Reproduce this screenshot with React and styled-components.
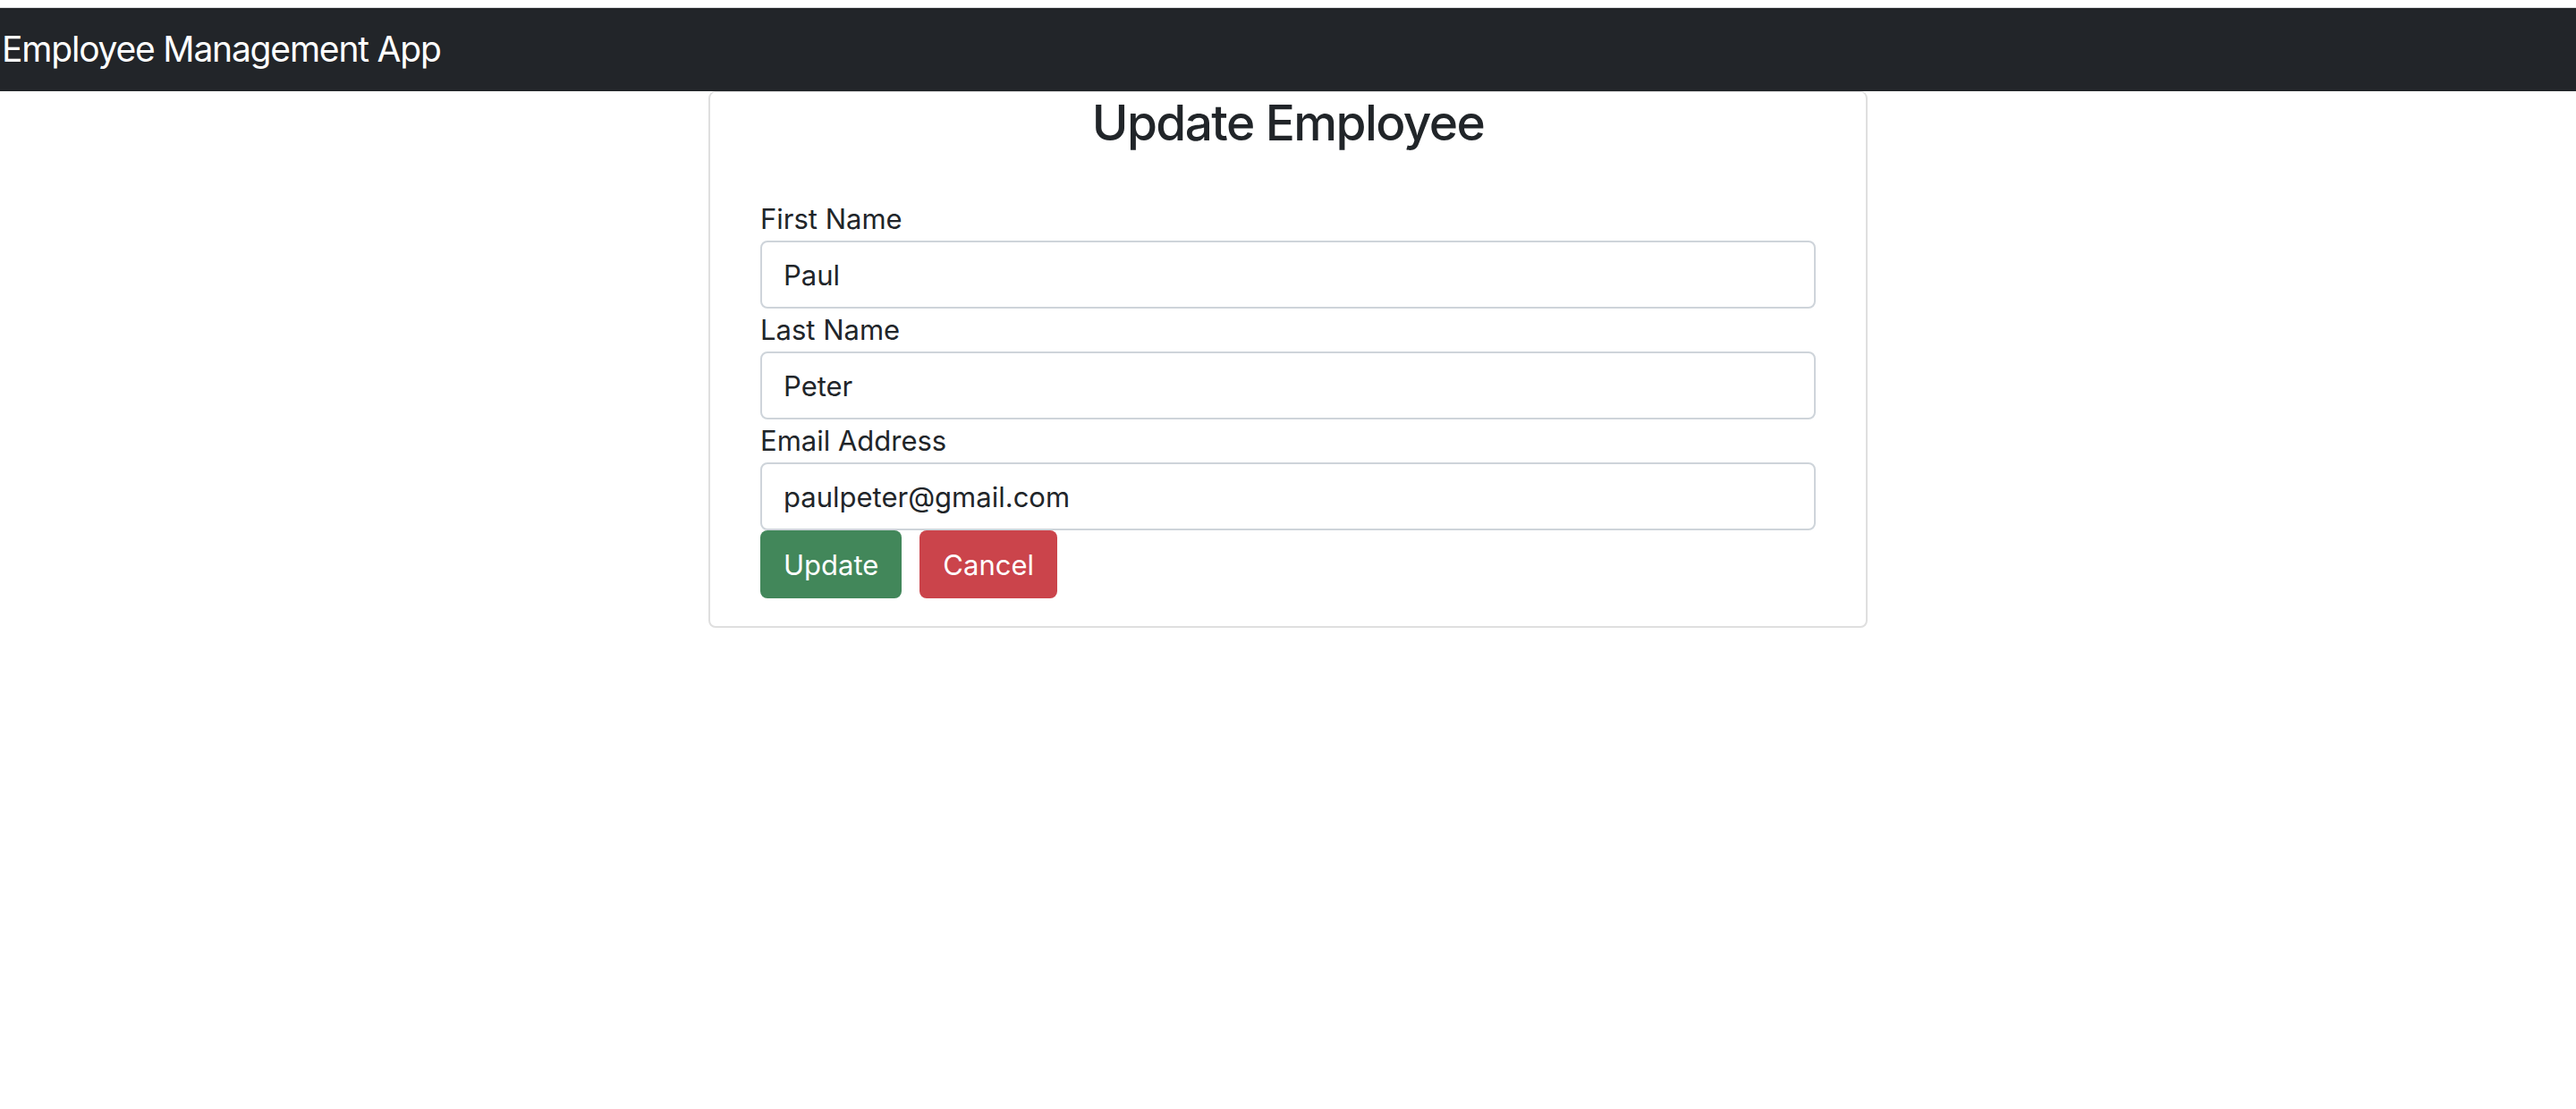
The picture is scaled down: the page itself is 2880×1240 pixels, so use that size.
import React from "react";
import styled, { createGlobalStyle } from "styled-components";

const Strings = {
  brand: "Employee Management App",
  title: "Update Employee",
  update: "Update",
  cancel: "Cancel"
};

const Fields = [
  { id: "firstName", label: "First Name", value: "Paul" },
  { id: "lastName", label: "Last Name", value: "Peter" },
  { id: "emailId", label: "Email Address", value: "paulpeter@gmail.com" }
];

const GlobalStyle = createGlobalStyle`
  body {
    margin: 0;
    background: #fff;
    color: #212529;
    font-family: Inter, "Liberation Sans", Arial, sans-serif;
  }
`;

const App = () => (
  <Page>
    <GlobalStyle />
    <Navbar>
      <Brand>{Strings.brand}</Brand>
    </Navbar>
    <Card>
      <Title>{Strings.title}</Title>
      <form onSubmit={e => e.preventDefault()}>
        {Fields.map(f => (
          <Field key={f.id}>
            <Label htmlFor={f.id}>{f.label}</Label>
            <Input id={f.id} name={f.id} defaultValue={f.value} />
          </Field>
        ))}
        <Actions>
          <Button variant="success">{Strings.update}</Button>
          <Button variant="danger" type="button">
            {Strings.cancel}
          </Button>
        </Actions>
      </form>
    </Card>
  </Page>
);

const Page = styled.div`
  padding-top: 8px;
`;
const Navbar = styled.header`
  height: 93px;
  border-top: 1px solid #d9dadc;
  background: #222529;
  display: flex;
  align-items: center;
  padding-left: 2px;
`;
const Brand = styled.span`
  color: #fff;
  font-size: 39px;
  line-height: 1.5;
  letter-spacing: -1.2px;
`;
const Card = styled.div`
  box-sizing: border-box;
  width: 1296px;
  margin: 0 auto;
  padding: 1px 56px 31px;
  border: 2px solid #dfdfdf;
  border-top-width: 1px;
  border-radius: 8px;
`;
const Title = styled.h3`
  margin: 0 0 51px;
  text-align: center;
  font-size: 55px;
  font-weight: 500;
  line-height: 1.2;
  letter-spacing: -1.6px;
  color: #212529;
`;
const Field = styled.div`
  display: flex;
  flex-direction: column;
`;
const Label = styled.label`
  font-size: 31px;
  line-height: 48px;
  color: #212529;
`;
const Input = styled.input`
  box-sizing: border-box;
  height: 76px;
  width: 100%;
  padding: 0 24px;
  border: 2px solid #ced4da;
  border-radius: 8px;
  font-family: inherit;
  font-size: 31px;
  color: #212529;
  background: #fff;
  outline: none;
`;
const Actions = styled.div`
  display: flex;
  gap: 20px;
`;
const Button = styled.button`
  height: 76px;
  padding: 0 24px;
  border: 2px solid transparent;
  border-radius: 8px;
  font-family: inherit;
  font-size: 31px;
  color: #fff;
  cursor: pointer;
  background: ${({ variant }) => (variant === "danger" ? "#cb444b" : "#42875a")};
`;

export default App;
